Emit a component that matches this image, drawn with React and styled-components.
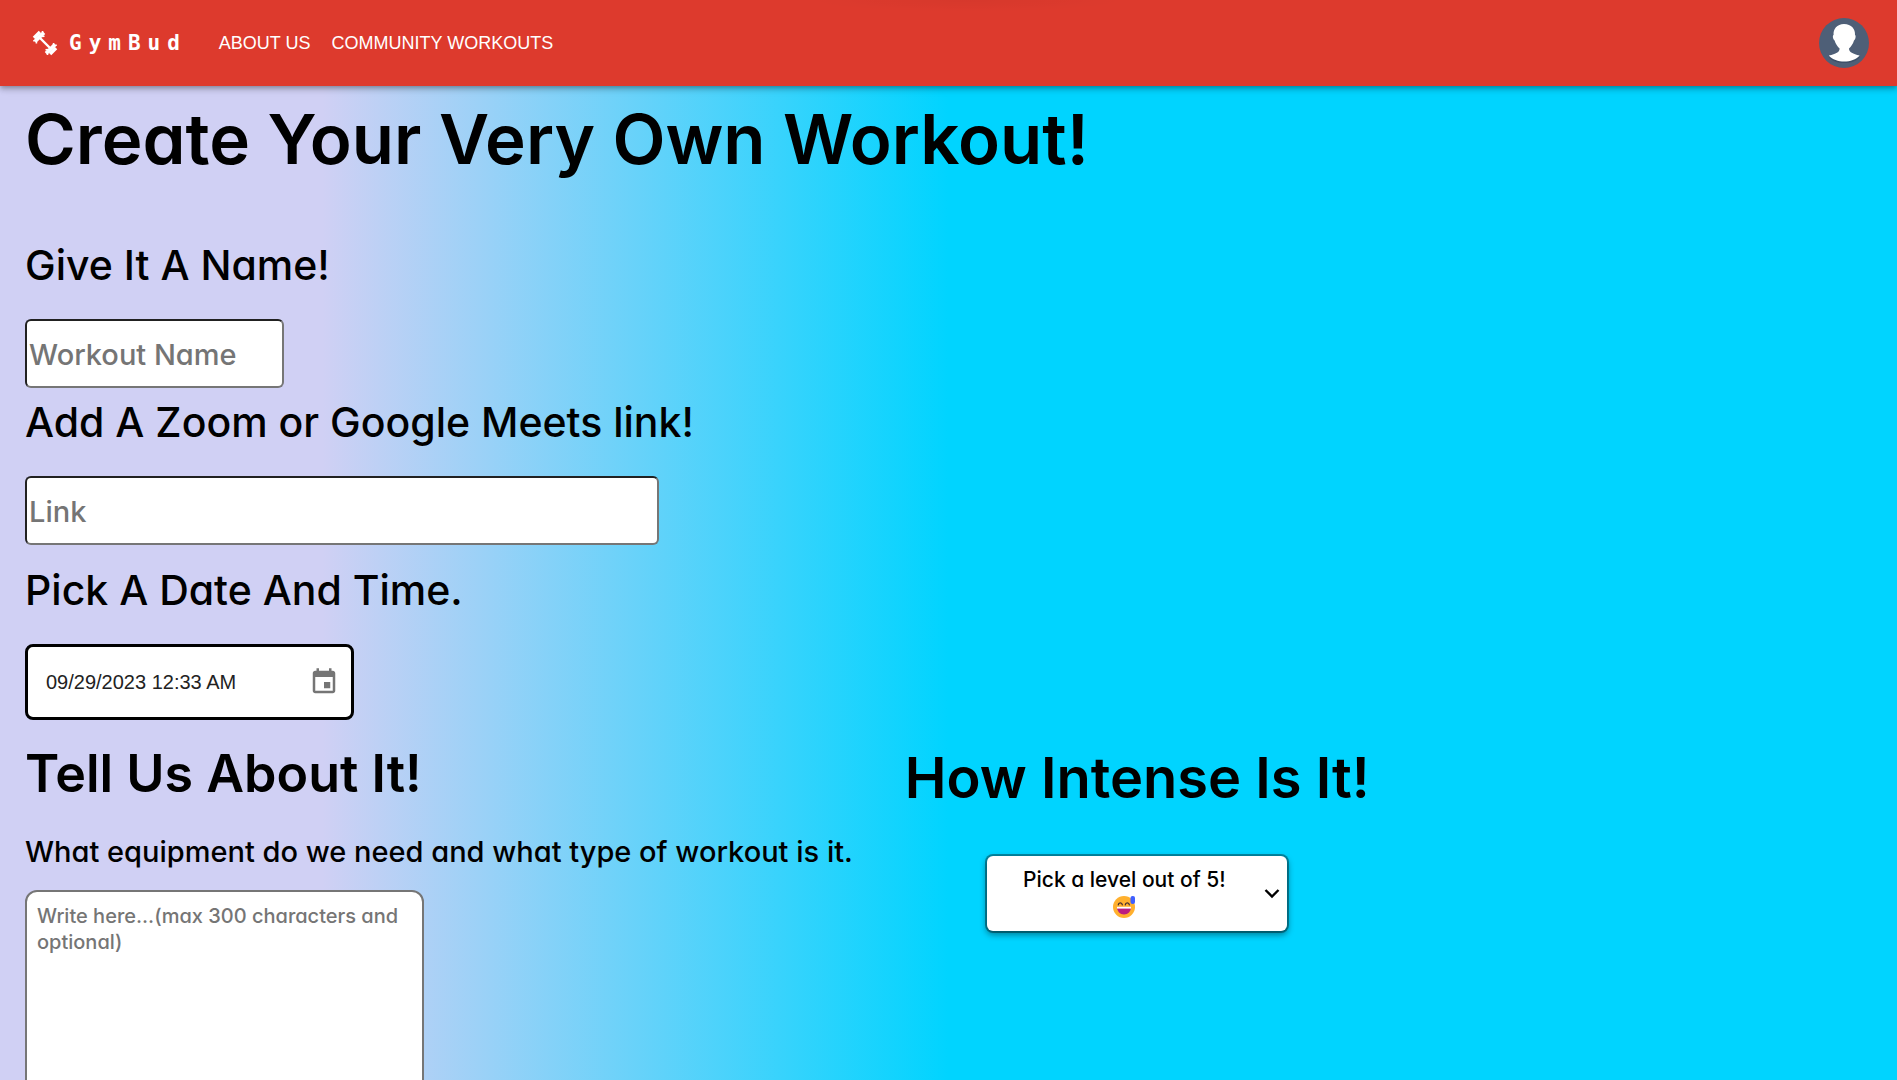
import React from 'react';
import styled, { createGlobalStyle } from 'styled-components';

const rounded = '"Inter", "Open Sans", sans-serif';
const arial = '"Liberation Sans", Arial, sans-serif';

const GlobalStyle = createGlobalStyle`
  *, *::before, *::after { box-sizing: border-box; }
  body { margin: 0; }
`;

const Page = styled.div`
  height: 100vh;
  overflow-y: auto;
  scrollbar-width: none;
  background: linear-gradient(90deg, #d0d0f4 17%, #00d4ff 50%);
  color: #000;
  font-family: ${rounded};
  font-feature-settings: "cv11";
`;

const Header = styled.header`
  display: flex;
  align-items: center;
  height: 86px;
  padding: 0 28px 0 32px;
  background: radial-gradient(ellipse 160px 12px at 51% 0, rgba(0, 0, 0, 0.03), transparent) #dd3a2d;
  box-shadow: 0 2px 4px -1px rgba(0, 0, 0, 0.2), 0 4px 5px rgba(0, 0, 0, 0.14), 0 1px 10px rgba(0, 0, 0, 0.12);
`;

const Brand = styled.a`
  display: flex;
  align-items: center;
  gap: 11px;
  color: #fff;
  font: 700 21px/32px "DejaVu Sans Mono", monospace;
  letter-spacing: 7px;
  text-decoration: none;
`;

const Nav = styled.nav`
  display: flex;
  gap: 21px;
  margin-left: 32px;
`;

const NavLink = styled.a`
  color: #fff;
  font: 400 18px/24px ${arial};
  text-decoration: none;
`;

const AvatarButton = styled.button`
  display: flex;
  margin-left: auto;
  padding: 0;
  border: 0;
  border-radius: 50%;
  background: none;
`;

const Main = styled.main`
  padding: 11px 25px 40px;
`;

const Title = styled.h1`
  margin: 0 0 58px;
  font-size: 69px;
  font-weight: 600;
  line-height: 84px;
`;

const Field = styled.div`
  display: flex;
  flex-direction: column;
  align-items: flex-start;
  gap: 28px;
  margin-bottom: ${(p) => p.$after}px;
`;

const FieldLabel = styled.label`
  font-size: 41px;
  font-weight: 500;
  line-height: 52px;
`;

const TextInput = styled.input`
  width: ${(p) => p.$width}px;
  max-width: 100%;
  height: 69px;
  padding: 3px 2px 1px;
  border: 2px inset #767676;
  border-radius: 6px;
  background: #fff;
  font: 500 29px/36px ${rounded};
  font-feature-settings: inherit;

  &::placeholder { color: #757575; }
`;

const DateBox = styled.div`
  display: flex;
  align-items: center;
  width: 329px;
  height: 76px;
  padding: 0 12px 0 18px;
  border: 3px solid #000;
  border-radius: 8px;
  background: #fff;
`;

const DateInput = styled.input`
  flex: 1;
  min-width: 0;
  padding: 0;
  border: 0;
  outline: 0;
  background: none;
  color: #222;
  font: 400 20px/28px ${arial};
`;

const IconButton = styled.button`
  display: flex;
  padding: 0;
  border: 0;
  background: none;
  color: #757575;
`;

const Details = styled.div`
  display: flex;
  align-items: flex-start;
  gap: 52px;
`;

const About = styled.section`
  flex: none;
`;

const Intensity = styled.section`
  display: flex;
  flex-direction: column;
  align-items: center;
  padding-top: 4px;
`;

const SectionTitle = styled.h2`
  margin: 0;
  font-size: ${(p) => p.$size}px;
  font-weight: 600;
  line-height: 60px;
`;

const Hint = styled.label`
  display: block;
  margin: 30px 0 20px;
  font-size: 29px;
  font-weight: 500;
  line-height: 36px;
`;

const Notes = styled.textarea`
  display: block;
  width: 399px;
  height: 300px;
  padding: 11px 10px;
  border: 2px solid #767676;
  border-radius: 12px;
  background: #fff;
  font: 500 20px/26px ${rounded};
  font-feature-settings: inherit;
  resize: none;

  &::placeholder { color: #757575; }
`;

const LevelButton = styled.button`
  display: flex;
  align-items: center;
  width: 300px;
  margin-top: 48px;
  padding: 10px 6px 8px 8px;
  border: 0;
  border-radius: 6px;
  background: #fff;
  box-shadow: 0 0 0 2px rgba(0, 0, 0, 0.35), 0 3px 6px 1px rgba(0, 0, 0, 0.4);
  color: #000;
  font: 500 21px/28px ${rounded};
  font-feature-settings: inherit;
`;

const LevelText = styled.span`
  display: flex;
  flex: 1;
  flex-direction: column;
  align-items: center;
  gap: 2px;
  padding: 0 10px 5px 0;
`;

function Barbell() {
  return (
    <svg width="26" height="26" viewBox="0 0 26 26" fill="none" stroke="#fff" aria-hidden="true">
      <path d="M7 7 L19 19" strokeWidth="2.4" />
      <path d="M3 11.4 L12 2.6" strokeWidth="3.6" />
      <path d="M2 8 L8 2" strokeWidth="3.6" />
      <path d="M1.2 10.8h3M10.5 1v4M9.5 6.4l3-.2M4.4 9v4.4" strokeWidth="1.6" />
      <path d="M14 23.4 L23 14.6" strokeWidth="3.6" />
      <path d="M18 24 L24 18" strokeWidth="3.6" />
      <path d="M21.5 15.2h3.3M15.5 21v4M13.5 19.8l3-.2M21.6 13v4" strokeWidth="1.6" />
    </svg>
  );
}

function Avatar() {
  return (
    <svg width="50" height="50" viewBox="0 0 50 50" aria-hidden="true">
      <circle cx="25" cy="25" r="25" fill="#4e5f77" />
      <path d="M10 39 C15 47 35 47 41 39 C35 36 31 36 30 31 L21 31 C19 36 16 36 10 39Z" fill="#34465f" opacity=".6" />
      <path d="M25 6 C18 6 14 11 14.6 17 C13.2 17.5 14 21.5 15.6 22.5 C16.6 26 18.5 28.5 20.6 30.5 C20.6 34.5 17 35.6 9.8 37.6 C17 45.6 33.5 45.6 40.6 37.6 C34 35.6 30 34.5 30 30.5 C32 28.5 34 26 35 22.5 C36.6 21.5 37.2 17.5 36 17 C36.4 11 32.5 6 25 6Z" fill="#fff" />
    </svg>
  );
}

function CalendarIcon() {
  return (
    <svg width="30" height="30" viewBox="0 0 24 24" fill="currentColor" aria-hidden="true">
      <path d="M17 12h-5v5h5v-5zM16 1v2H8V1H6v2H5c-1.11 0-1.99.9-1.99 2L3 19c0 1.1.89 2 2 2h14c1.1 0 2-.9 2-2V5c0-1.1-.9-2-2-2h-1V1h-2zm3 18H5V8h14v11z" />
    </svg>
  );
}

function GrinningSweat() {
  return (
    <svg width="22" height="22" viewBox="0 0 22 22" role="img" aria-label="Grinning face with sweat">
      <circle cx="11" cy="11" r="11" fill="#ffb02e" />
      <path d="M4 11h14c0 4.5-3 7.5-7 7.5S4 15.5 4 11Z" fill="#bb1d80" />
      <path d="M4 10.8h14v1.8H4Z" fill="#fff" />
      <path d="M5.3 8.8c.3-2.6 3.7-2.6 4 0M12.3 8.8c.3-2.6 3.7-2.6 4 0" fill="none" stroke="#402a32" strokeWidth="1.3" strokeLinecap="round" />
      <rect x="17.5" y="0" width="4.5" height="8" rx="2" fill="#3f5fff" />
    </svg>
  );
}

function Chevron() {
  return (
    <svg width="18" height="18" viewBox="0 0 18 18" fill="none" stroke="#000" strokeWidth="2.4" aria-hidden="true">
      <path d="M2.5 4 L9 10.5 L15.5 4" />
    </svg>
  );
}

export default function App() {
  return (
    <Page>
      <GlobalStyle />
      <Header>
        <Brand href="#home">
          <Barbell />
          GymBud
        </Brand>
        <Nav>
          <NavLink href="#about">ABOUT US</NavLink>
          <NavLink href="#community">COMMUNITY WORKOUTS</NavLink>
        </Nav>
        <AvatarButton type="button" aria-label="Account">
          <Avatar />
        </AvatarButton>
      </Header>
      <Main>
        <Title>Create Your Very Own Workout!</Title>
        <Field $after={8}>
          <FieldLabel htmlFor="name">Give It A Name!</FieldLabel>
          <TextInput id="name" $width={259} placeholder="Workout Name" />
        </Field>
        <Field $after={19}>
          <FieldLabel htmlFor="link">Add A Zoom or Google Meets link!</FieldLabel>
          <TextInput id="link" $width={634} placeholder="Link" />
        </Field>
        <Field $after={24}>
          <FieldLabel htmlFor="date">Pick A Date And Time.</FieldLabel>
          <DateBox>
            <DateInput id="date" defaultValue="09/29/2023 12:33 AM" />
            <IconButton type="button" aria-label="Choose date">
              <CalendarIcon />
            </IconButton>
          </DateBox>
        </Field>
        <Details>
          <About>
            <SectionTitle $size={52}>Tell Us About It!</SectionTitle>
            <Hint htmlFor="notes">What equipment do we need and what type of workout is it.</Hint>
            <Notes id="notes" placeholder="Write here...(max 300 characters and optional)" />
          </About>
          <Intensity>
            <SectionTitle $size={56}>How Intense Is It!</SectionTitle>
            <LevelButton type="button" aria-haspopup="listbox">
              <LevelText>
                Pick a level out of 5!
                <GrinningSweat />
              </LevelText>
              <Chevron />
            </LevelButton>
          </Intensity>
        </Details>
      </Main>
    </Page>
  );
}
